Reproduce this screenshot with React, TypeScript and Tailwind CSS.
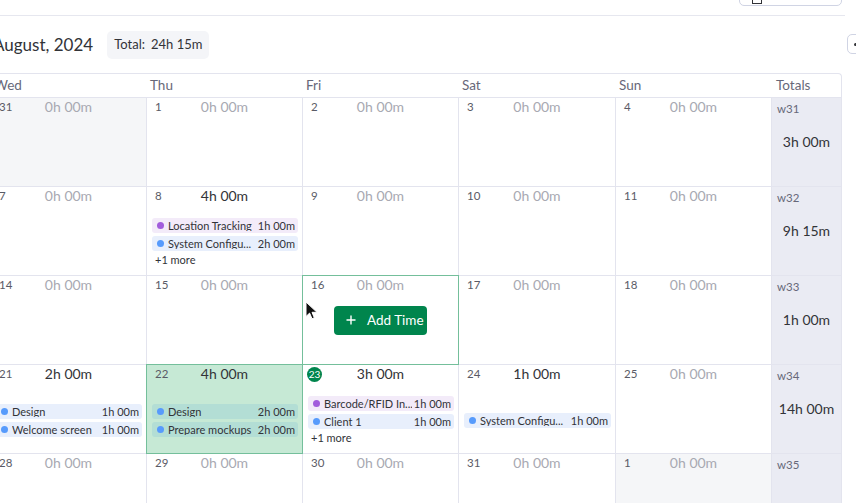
import React from "react";

type Entry = { name: string; dur: string; color: "purple" | "blue" };
type Cell = {
  day: string;
  hours: string;
  active?: boolean;
  out?: boolean;
  entries?: Entry[];
  more?: string;
  today?: boolean;
  hover?: boolean;
  selected?: boolean;
};

const rows: { cells: Cell[]; week: string; total: string }[] = [
  {
    week: "w31",
    total: "3h 00m",
    cells: [
      { day: "31", hours: "0h 00m", out: true },
      { day: "1", hours: "0h 00m" },
      { day: "2", hours: "0h 00m" },
      { day: "3", hours: "0h 00m" },
      { day: "4", hours: "0h 00m" },
    ],
  },
  {
    week: "w32",
    total: "9h 15m",
    cells: [
      { day: "7", hours: "0h 00m" },
      {
        day: "8",
        hours: "4h 00m",
        active: true,
        entries: [
          { name: "Location Tracking", dur: "1h 00m", color: "purple" },
          { name: "System Configu...", dur: "2h 00m", color: "blue" },
        ],
        more: "+1 more",
      },
      { day: "9", hours: "0h 00m" },
      { day: "10", hours: "0h 00m" },
      { day: "11", hours: "0h 00m" },
    ],
  },
  {
    week: "w33",
    total: "1h 00m",
    cells: [
      { day: "14", hours: "0h 00m" },
      { day: "15", hours: "0h 00m" },
      { day: "16", hours: "0h 00m", hover: true },
      { day: "17", hours: "0h 00m" },
      { day: "18", hours: "0h 00m" },
    ],
  },
  {
    week: "w34",
    total: "14h 00m",
    cells: [
      {
        day: "21",
        hours: "2h 00m",
        active: true,
        entries: [
          { name: "Design", dur: "1h 00m", color: "blue" },
          { name: "Welcome screen", dur: "1h 00m", color: "blue" },
        ],
      },
      {
        day: "22",
        hours: "4h 00m",
        active: true,
        selected: true,
        entries: [
          { name: "Design", dur: "2h 00m", color: "blue" },
          { name: "Prepare mockups", dur: "2h 00m", color: "blue" },
        ],
      },
      {
        day: "23",
        hours: "3h 00m",
        active: true,
        today: true,
        entries: [
          { name: "Barcode/RFID In...", dur: "1h 00m", color: "purple" },
          { name: "Client 1", dur: "1h 00m", color: "blue" },
        ],
        more: "+1 more",
      },
      {
        day: "24",
        hours: "1h 00m",
        active: true,
        entries: [{ name: "System Configu...", dur: "1h 00m", color: "blue" }],
      },
      { day: "25", hours: "0h 00m" },
    ],
  },
  {
    week: "w35",
    total: "",
    cells: [
      { day: "28", hours: "0h 00m" },
      { day: "29", hours: "0h 00m" },
      { day: "30", hours: "0h 00m" },
      { day: "31", hours: "0h 00m" },
      { day: "1", hours: "0h 00m", out: true },
    ],
  },
];

function Pill({ e, selected }: { e: Entry; selected?: boolean }) {
  const bg = selected
    ? "bg-[#b3ded5]"
    : e.color === "purple"
    ? "bg-[#f3ebf9]"
    : "bg-[#e8effc]";
  const dot = e.color === "purple" ? "bg-[#a25ddc]" : "bg-[#579bfc]";
  return (
    <div className={`flex h-[15px] items-center rounded-[3px] pl-[5px] pr-[3px] ${bg}`}>
      <span className={`h-[7px] w-[7px] shrink-0 rounded-full ${dot}`} />
      <span className="ml-[4px] min-w-0 flex-1 overflow-hidden whitespace-nowrap text-[11px] leading-none text-[#323338]">
        {e.name}
      </span>
      <span className="ml-[2px] shrink-0 text-[11px] leading-none text-[#323338]">{e.dur}</span>
    </div>
  );
}

function DayCell({ c }: { c: Cell }) {
  const bg = c.selected ? "bg-[#c6e9d5]" : c.out ? "bg-[#f5f6f8]" : "bg-white";
  return (
    <div className={`relative flex h-[89px] flex-col border-b border-r border-[#e3e4ee] ${bg}`}>
      {(c.hover || c.selected) && (
        <div className="pointer-events-none absolute -left-px -top-px -bottom-px -right-px border border-[#74bf9b]" />
      )}
      <div className="grid h-[22px] shrink-0 grid-cols-[1fr_auto_1fr] items-start px-[8px] pt-[1px]">
        <div className="flex h-[16px] items-center">
          {c.today ? (
            <span className="-ml-[4px] flex h-[15px] w-[15px] items-center justify-center rounded-full bg-[#00854d] text-[10px] leading-none text-white">
              {c.day}
            </span>
          ) : (
            <span className="text-[11.5px] leading-none text-[#5a5b66]">{c.day}</span>
          )}
        </div>
        <span
          className={
            c.active
              ? "text-[14px] leading-[16px] text-[#323338]"
              : "text-[14px] leading-[16px] text-[#a8a9b2]"
          }
        >
          {c.hours}
        </span>
        <span />
      </div>
      {c.entries && (
        <div className="flex flex-1 flex-col justify-center gap-[3px] pl-[5px] pr-[4px]">
          {c.entries.map((e, i) => (
            <Pill key={i} e={e} selected={c.selected} />
          ))}
          {c.more && (
            <div className="pl-[3px] text-[11px] leading-[12px] text-[#323338]">{c.more}</div>
          )}
        </div>
      )}
      {c.hover && (
        <div className="absolute inset-0 flex items-center justify-center">
          <button className="flex h-[29px] w-[93px] items-center gap-[11px] rounded-[4px] bg-[#00854d] pl-[12px] text-[13.5px] text-white">
            <svg width="10" height="10" viewBox="0 0 10 10">
              <path d="M5 0.5v9M0.5 5h9" stroke="white" strokeWidth="1.4" />
            </svg>
            <span>Add Time</span>
          </button>
        </div>
      )}
    </div>
  );
}

export default function App() {
  return (
    <div
      className="relative h-[503px] w-[856px] overflow-hidden bg-white"
      style={{ fontFamily: "Lato, 'Noto Sans', sans-serif" }}
    >
      {/* top bar */}
      <div className="flex h-[16px] w-[845px] justify-end border-b border-[#e6e7ef]">
        <div className="-mt-[8px] mr-[3px] flex h-[14px] w-[103px] items-center rounded-[5px] border border-[#d0d4e4] pl-[12px]">
          <div className="mt-[4px] h-[6px] w-[10px] border border-t-0 border-[#323338]" />
        </div>
      </div>

      {/* heading */}
      <div className="relative flex h-[57px] items-center">
        <h1 className="-ml-[7px] text-[17px] font-normal text-[#323338]">August, 2024</h1>
        <div className="ml-[14px] flex h-[28px] items-center rounded-[5px] bg-[#f4f5f8] px-[7px] text-[13px] text-[#323338]">
          <span>Total:</span>
          <span className="ml-[6px]">24h 15m</span>
        </div>
        <div className="absolute left-[847px] top-[18px] h-[20px] w-[20px] rounded-[5px] border border-[#d0d4e4]">
          <div className="absolute left-[6px] top-[8px] h-[3px] w-[3px] rounded-full bg-[#323338]" />
        </div>
      </div>

      {/* calendar */}
      <div className="-ml-[9px] w-[851px] overflow-hidden rounded-tr-[4px] border-r border-t border-[#e3e4ee]">
        <div className="grid grid-cols-[156px_156px_156px_157px_156px_69px]">
          {["Wed", "Thu", "Fri", "Sat", "Sun", "Totals"].map((d, i) => (
            <div
              key={d}
              className={`flex h-[24px] items-center border-b border-[#e3e4ee] text-[13.5px] text-[#676879] ${
                i === 5 ? "pl-[4px]" : "pl-[3px]"
              }`}
            >
              {d}
            </div>
          ))}
          {rows.map((r, ri) => (
            <React.Fragment key={ri}>
              {r.cells.map((c, ci) => (
                <DayCell key={ci} c={c} />
              ))}
              <div className="flex h-[89px] flex-col border-b border-[#e3e4ee] bg-[#eaebf3]">
                <span className="h-[18px] shrink-0 pl-[5px] pt-[4px] text-[11.5px] leading-[13px] text-[#676879]">
                  {r.week}
                </span>
                <div className="flex flex-1 items-center justify-center pb-[19px] text-[14px] leading-[16px] text-[#323338]">
                  {r.total}
                </div>
              </div>
            </React.Fragment>
          ))}
        </div>
      </div>

      {/* cursor */}
      <svg className="absolute left-[305px] top-[301px]" width="13" height="19" viewBox="0 0 13 19">
        <path d="M1 1v14.5l3.6-3.4 2.4 5.6 2.3-1-2.3-5.4h5z" fill="#111" stroke="white" strokeWidth="1" />
      </svg>
    </div>
  );
}
